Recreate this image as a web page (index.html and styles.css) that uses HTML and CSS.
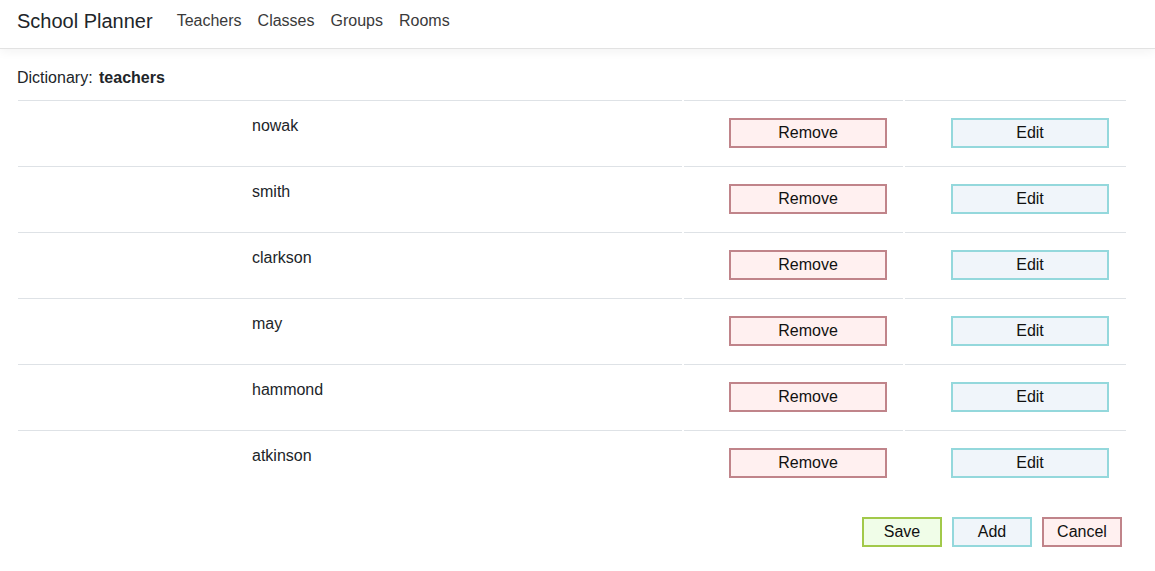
FILE: index.html
```html
<!DOCTYPE html>
<html>
<head>
<meta charset="utf-8">
<link rel="stylesheet" href="styles.css">
</head>
<body>
<header class="navbar">
  <span class="brand">School Planner</span>
  <nav class="nav">
    <a class="nav-link">Teachers</a>
    <a class="nav-link">Classes</a>
    <a class="nav-link">Groups</a>
    <a class="nav-link">Rooms</a>
  </nav>
</header>
<main class="main">
  <div class="dict">Dictionary: <b>teachers</b></div>
  <table class="table">
    <colgroup><col class="c-name"><col class="c-rm"><col class="c-ed"></colgroup>
    <tbody>
      <tr><td class="name">nowak</td><td><button class="btn btn-remove">Remove</button></td><td class="ed"><button class="btn btn-edit">Edit</button></td></tr>
      <tr><td class="name">smith</td><td><button class="btn btn-remove">Remove</button></td><td class="ed"><button class="btn btn-edit">Edit</button></td></tr>
      <tr><td class="name">clarkson</td><td><button class="btn btn-remove">Remove</button></td><td class="ed"><button class="btn btn-edit">Edit</button></td></tr>
      <tr><td class="name">may</td><td><button class="btn btn-remove">Remove</button></td><td class="ed"><button class="btn btn-edit">Edit</button></td></tr>
      <tr><td class="name">hammond</td><td><button class="btn btn-remove">Remove</button></td><td class="ed"><button class="btn btn-edit">Edit</button></td></tr>
      <tr><td class="name">atkinson</td><td><button class="btn btn-remove">Remove</button></td><td class="ed"><button class="btn btn-edit">Edit</button></td></tr>
    </tbody>
  </table>
  <div class="actions">
    <button class="btn btn-sm btn-save">Save</button>
    <button class="btn btn-sm btn-edit">Add</button>
    <button class="btn btn-sm btn-remove">Cancel</button>
  </div>
</main>
</body>
</html>
```

FILE: styles.css
```css
* { box-sizing: border-box; }
body {
  margin: 0;
  font-family: "Liberation Sans", Arial, sans-serif;
  font-size: 16px;
  line-height: 24px;
  color: #212529;
  background: #fff;
}
.navbar {
  height: 49px;
  display: flex;
  align-items: center;
  padding: 0 0 6px 17px;
  border-bottom: 1px solid #e2e2e2;
  box-shadow: 0 3px 10px rgba(0, 0, 0, 0.05);
  background: #fff;
}
.brand {
  font-size: 20px;
  line-height: 30px;
  color: #212529;
  margin-right: 16px;
}
.nav { display: flex; }
.nav-link {
  padding: 0 8px;
  color: #3a3a3a;
  font-size: 16px;
}
.main {
  padding: 17px 16px 0 16px;
}
.dict {
  line-height: 24px;
  margin-bottom: 8px;
  padding-left: 1px;
}
.dict b { margin-left: 2px; }
.table {
  width: 1112px;
  table-layout: fixed;
  border-collapse: separate;
  border-spacing: 2px;
}
.c-name { width: 664px; }
.c-rm { width: 219px; }
.c-ed { width: 221px; }
.table td {
  border-top: 1px solid #dee2e6;
  padding: 12px;
  vertical-align: top;
  height: 64px;
}
.table td.name { padding: 13px 12px 11px 234px; }
.btn {
  font-family: "Liberation Sans", Arial, sans-serif;
  font-size: 16px;
  color: #111;
  height: 30px;
  padding: 0;
  border: 2px solid;
  border-radius: 0;
  line-height: 26px;
}
.table .btn {
  display: block;
  width: 158px;
  margin: 5px 4px 4px auto;
}
.table td.ed .btn { margin-right: 5px; }
.btn-remove { background: #fff0f0; border-color: #c0848a; }
.btn-edit { background: #f0f5fa; border-color: #94d8dc; }
.btn-save { background: #f0fde8; border-color: #a2c94a; }
.actions {
  width: 1112px;
  display: flex;
  justify-content: flex-end;
  gap: 10px;
  padding-right: 6px;
  margin-top: 21px;
}
.btn-sm { width: 80px; }
```
